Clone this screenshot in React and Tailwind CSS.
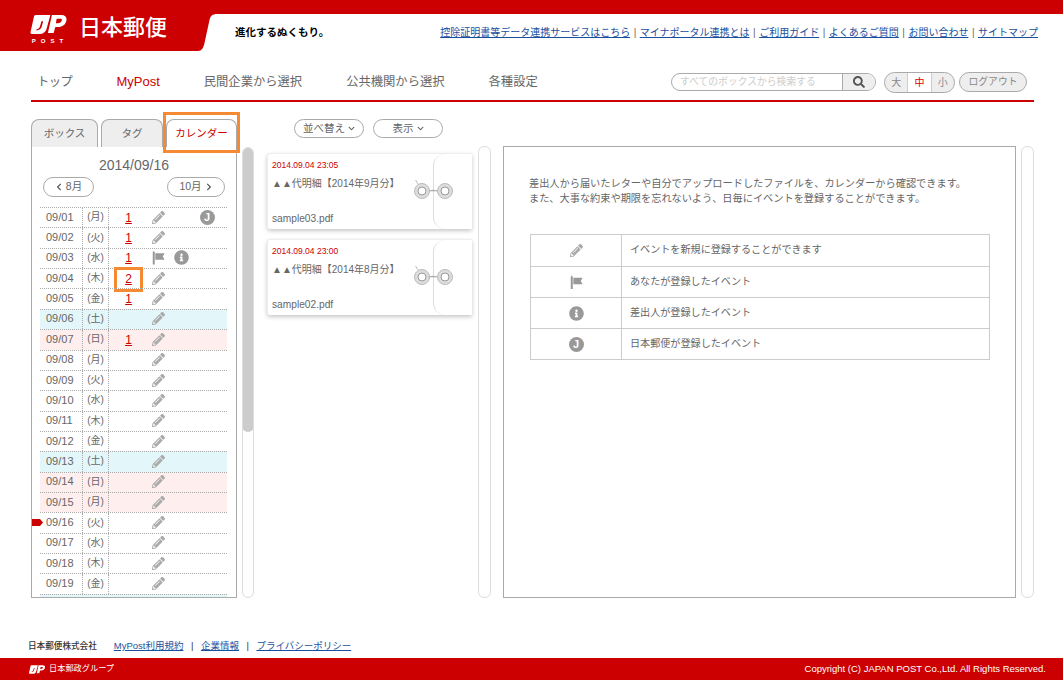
import React from 'react';
import { FaPencilAlt, FaInfoCircle, FaChevronLeft, FaChevronRight, FaChevronDown, FaSearch } from 'react-icons/fa';

const FONT = 'font-["Liberation_Sans","Noto_Sans_CJK_JP",sans-serif]';

const topLinks = ['控除証明書等データ連携サービスはこちら', 'マイナポータル連携とは', 'ご利用ガイド', 'よくあるご質問', 'お問い合わせ', 'サイトマップ'];

const days = [
    { d: '09/01', w: '月', n: '1', j: true },
    { d: '09/02', w: '火', n: '1' },
    { d: '09/03', w: '水', n: '1', flag: true, info: true },
    { d: '09/04', w: '木', n: '2', mark: true },
    { d: '09/05', w: '金', n: '1' },
    { d: '09/06', w: '土', bg: 'sat' },
    { d: '09/07', w: '日', n: '1', bg: 'sun' },
    { d: '09/08', w: '月' },
    { d: '09/09', w: '火' },
    { d: '09/10', w: '水' },
    { d: '09/11', w: '木' },
    { d: '09/12', w: '金' },
    { d: '09/13', w: '土', bg: 'sat' },
    { d: '09/14', w: '日', bg: 'sun' },
    { d: '09/15', w: '月', bg: 'sun' },
    { d: '09/16', w: '火', today: true },
    { d: '09/17', w: '水' },
    { d: '09/18', w: '木' },
    { d: '09/19', w: '金' },
];

const JpMark = ({ className }) => (
    <svg className={className} viewBox="0 0 38 20" fill="#fff" fillRule="evenodd">
        <path d="M5.5 0H21L17 14.5C16 18 13.5 20 9.5 20H1.5C0.4 20 -0.2 19.2 0.1 18L3.6 2C3.9 0.8 4.5 0 5.5 0ZM11.6 6.5L10 12C9.5 13.6 8.4 14.6 6.4 15L6.2 16.2C9.6 16 11.2 14.4 11.9 12L13.4 6.5Z" />
        <path d="M22.6 0H32.5C36.8 0 38.6 2.4 37.8 6C36.9 10 33.8 12.6 29 12.6H26.2L24.4 19H18.4ZM27.6 4L26.8 8.6H28.8C31 8.6 32.6 7.4 33 5.8C33.3 4.6 32.6 4 31.4 4Z" />
    </svg>
);

const FlagIcon = ({ className }) => (
    <svg className={className} viewBox="0 0 14 15" fill="#999">
        <path d="M0.8 2.2L1.9 0.3L3 2.2V15H0.8Z" />
        <path d="M3.6 3H13.6L11.6 6.5L13.6 10H3.6Z" />
    </svg>
);

const JIcon = () => (
    <span className="inline-flex items-center justify-center rounded-full bg-[#999] text-white font-bold text-[11px] leading-none w-[15px] h-[15px]">J</span>
);

const RingIcon = () => (
    <svg className="w-[40px] h-[24px]" viewBox="0 0 40 24" fill="none">
        <path d="M1.5 1L4 5" stroke="#aaa" strokeWidth="0.8" />
        <circle cx="8" cy="12" r="7.5" stroke="#bbb" strokeWidth="1" fill="#ddd" />
        <circle cx="8" cy="12" r="4" stroke="#999" strokeWidth="1" fill="#fff" />
        <path d="M15 12L19 11.4L24 12" stroke="#aaa" strokeWidth="1.2" />
        <circle cx="31" cy="12" r="7.5" stroke="#bbb" strokeWidth="1" fill="#ddd" />
        <circle cx="31" cy="12" r="4" stroke="#999" strokeWidth="1" fill="#fff" />
    </svg>
);

const ScrollTrack = ({ thumb }) => (
    <div className="w-[13px] h-full rounded-[6px] border border-[#ddd] bg-white overflow-hidden">
        {thumb && <div className="-m-px h-[285px] rounded-[6px] bg-[#ccc]" />}
    </div>
);

const DayRow = ({ day }) => {
    const bg = day.bg === 'sat' ? 'bg-[#e3f7fb]' : day.bg === 'sun' ? 'bg-[#ffeeee]' : '';
    return (
        <div className={`relative grid grid-cols-[42px_26px_40px_20px_27px_24px] h-[20.37px] items-center border-t border-dotted border-[#aaa] text-[#666] ${bg}`}>
            {day.today && (
                <svg className="absolute left-[-8px] top-[6px] w-[11px] h-[7px]" viewBox="0 0 11 7" fill="#cc0000">
                    <path d="M0 0H8L11 3.5L8 7H0Z" />
                </svg>
            )}
            <span className="pl-[6px] pb-[1px] text-[11px] leading-none">{day.d}</span>
            <span className="h-full flex items-center justify-center pb-[1px] border-l border-dotted border-[#aaa] text-[10px] leading-none">({day.w})</span>
            <span className="h-full flex items-center justify-center border-l border-dotted border-[#aaa]">
                {day.n && (
                    <span className="relative text-[12px] leading-none">
                        <a className="text-[#cc0000] underline">{day.n}</a>
                        {day.mark && <span className="absolute left-[-11px] top-[-6px] w-[29px] h-[25px] border-[3px] border-[#f58a32]" />}
                    </span>
                )}
            </span>
            <span className="flex justify-center pb-[1px]">
                {day.flag ? <FlagIcon className="w-[13px] h-[15px]" /> : <FaPencilAlt className="text-[#aaa] text-[13px]" />}
            </span>
            <span className="flex justify-center pb-[1px]">{day.info && <FaInfoCircle className="text-[#999] text-[15px]" />}</span>
            <span className="flex justify-center pb-[1px]">{day.j && <JIcon />}</span>
        </div>
    );
};

const MailCard = ({ date, title, file }) => (
    <div className="relative h-[76px] w-[205px] rounded-l-[3px] bg-white shadow-[0_2px_4px_rgba(0,0,0,0.22)] border-t border-l border-[#eee] pl-[4px] pt-[5px] text-[#666]">
        <div className="text-[8.5px] leading-[12px] text-[#cc0000]">{date}</div>
        <div className="mt-[6px] text-[10px] leading-[14px]">{title}</div>
        <div className="mt-[21px] text-[10.2px] leading-[14px]">{file}</div>
        <div className="absolute right-0 top-0 bottom-0 w-[39px] border-l border-[#ddd] rounded-l-[12px]" />
        <div className="absolute left-[146px] top-[25px]"><RingIcon /></div>
    </div>
);

const legend = [
    { icon: <FaPencilAlt className="text-[#aaa] text-[13px]" />, text: 'イベントを新規に登録することができます' },
    { icon: <FlagIcon className="w-[13px] h-[14px]" />, text: 'あなたが登録したイベント' },
    { icon: <FaInfoCircle className="text-[#999] text-[15px]" />, text: '差出人が登録したイベント' },
    { icon: <JIcon />, text: '日本郵便が登録したイベント' },
];

const PillButton = ({ className, children }) => (
    <button className={`h-[19px] flex items-center justify-center rounded-full border border-[#aaa] bg-white text-[10.5px] text-[#666] ${className}`}>
        {children}
    </button>
);

export default function App() {
    return (
        <div className={`${FONT} w-[1063px] h-[680px] overflow-hidden bg-white flex flex-col text-[#666]`}>
            <div className="h-[14px] bg-[#cc0000] shrink-0" />

            {/* header */}
            <div className="h-[37px] shrink-0 flex">
                <div className="relative w-[198px] h-full bg-[#cc0000] flex items-start pl-[29px]">
                    <div className="w-[38px] flex flex-col items-center">
                        <JpMark className="w-[37px] h-[19px] mt-[1px]" />
                        <span className="text-[6px] font-bold text-white leading-none tracking-[5px] mt-[4px] pl-[4px]">POST</span>
                    </div>
                    <span className="ml-[12px] mt-[-2px] text-[22px] font-medium leading-[32px] text-white whitespace-nowrap">日本郵便</span>
                </div>
                <svg className="w-[20px] h-full shrink-0" viewBox="0 0 20 37" fill="#cc0000">
                    <path d="M0 0H19.5C14 0 12.5 2 11.5 6L6.5 29C5.5 34 3.5 37 0 37Z" />
                </svg>
                <span className="ml-[17px] mt-[12px] text-[10.5px] leading-[13px] font-bold text-black whitespace-nowrap">進化するぬくもり。</span>
                <div className="ml-auto mr-[25px] mt-[12px] self-start flex items-center text-[10px] leading-[13px] whitespace-nowrap">
                    {topLinks.map((l, i) => (
                        <React.Fragment key={l}>
                            {i > 0 && <span className="mx-[3.5px] text-[#666]">|</span>}
                            <a className="text-[#1a4fa0] underline">{l}</a>
                        </React.Fragment>
                    ))}
                </div>
            </div>

            {/* nav */}
            <div className="mx-[29px] ml-[31px] mt-[21px] h-[30px] shrink-0 pb-[8px] border-b-2 border-[#cc0000] flex items-center">
                <div className="flex items-center gap-[44px] pl-[6px] text-[12.3px] whitespace-nowrap">
                    <span className="tracking-[-0.5px]">トップ</span>
                    <span className="text-[#cc0000] text-[13px]">MyPost</span>
                    <span>民間企業から選択</span>
                    <span>公共機関から選択</span>
                    <span>各種設定</span>
                </div>
                <div className="ml-auto flex items-center pr-[7px]">
                    <div className="w-[205px] h-[18px] flex items-center rounded-full border border-[#aaa] overflow-hidden">
                        <span className="flex-1 pl-[8px] text-[9.8px] text-[#ccc] whitespace-nowrap">すべてのボックスから検索する</span>
                        <span className="w-[33px] h-full flex items-center justify-center bg-[#eee] border-l border-[#aaa]">
                            <FaSearch className="text-[#555] text-[12px]" />
                        </span>
                    </div>
                    <div className="ml-[8px] w-[71px] h-[21px] flex rounded-full border border-[#aaa] overflow-hidden text-[10px] bg-[#eee]">
                        <span className="flex-1 flex items-center justify-center text-[#888]">大</span>
                        <span className="flex-1 flex items-center justify-center bg-white border-x border-[#ccc] text-[#dd0000]">中</span>
                        <span className="flex-1 flex items-center justify-center text-[#888]">小</span>
                    </div>
                    <div className="ml-[4px] w-[68px] h-[20px] flex items-center justify-center rounded-full border border-[#aaa] bg-[#eee] text-[9.8px] text-[#888]">ログアウト</div>
                </div>
            </div>

            {/* main */}
            <div className="mx-[29px] ml-[31px] mt-[17px] h-[479px] shrink-0 flex">
                {/* calendar column */}
                <div className="w-[223px] shrink-0 flex flex-col">
                    <div className="relative h-[28px] flex shrink-0 text-[10.5px]">
                        <span className="w-[67px] flex items-center justify-center rounded-t-[8px] border border-b-0 border-[#aaa] bg-[#eee]">ボックス</span>
                        <span className="ml-[3px] w-[62px] flex items-center justify-center rounded-t-[8px] border border-b-0 border-[#aaa] bg-[#eee]">タグ</span>
                        <span className="ml-[3px] w-[71px] flex items-center justify-center rounded-t-[8px] border border-b-0 border-[#aaa] bg-white text-[#cc0000]">カレンダー</span>
                        <span className="absolute left-[132px] top-[-7px] w-[77px] h-[41px] border-[3px] border-[#f58a32]" />
                    </div>
                    <div className="flex flex-1 min-h-0 gap-[5px]">
                        <div className="w-[206px] shrink-0 border border-t-0 border-[#aaa] overflow-hidden">
                            <div className="pt-[9px] text-center text-[14px] leading-[18px]">2014/09/16</div>
                            <div className="mt-[3px] px-[11px] flex justify-between">
                                <button className="w-[51px] h-[20px] flex items-center justify-center gap-[3px] rounded-full border border-[#aaa] text-[10.5px] text-[#666]">
                                    <FaChevronLeft className="text-[8px] text-[#555]" />8月
                                </button>
                                <button className="w-[58px] h-[20px] flex items-center justify-center gap-[3px] rounded-full border border-[#aaa] text-[10.5px] text-[#666]">
                                    10月<FaChevronRight className="text-[8px] text-[#555]" />
                                </button>
                            </div>
                            <div className="mt-[10px] mx-[8px] w-[187px]">
                                {days.map((day) => <DayRow key={day.d} day={day} />)}
                                <div className="h-[4px] bg-[#e3f7fb] border-t border-dotted border-[#aaa]" />
                            </div>
                        </div>
                        <ScrollTrack thumb />
                    </div>
                </div>

                {/* mail column */}
                <div className="ml-[13px] w-[224px] shrink-0 flex flex-col">
                    <div className="h-[27px] shrink-0 flex gap-[9px] pl-[27px]">
                        <PillButton className="w-[70px] gap-[3px]">並べ替え<FaChevronDown className="text-[7px]" /></PillButton>
                        <PillButton className="w-[70px] gap-[3px]">表示<FaChevronDown className="text-[7px]" /></PillButton>
                    </div>
                    <div className="flex flex-1 min-h-0 justify-between">
                        <div className="pt-[7px] flex flex-col gap-[10px]">
                            <MailCard date="2014.09.04 23:05" title="▲▲代明細【2014年9月分】" file="sample03.pdf" />
                            <MailCard date="2014.09.04 23:00" title="▲▲代明細【2014年8月分】" file="sample02.pdf" />
                        </div>
                        <ScrollTrack />
                    </div>
                </div>

                {/* detail column */}
                <div className="ml-[12px] w-[531px] shrink-0 pt-[27px] flex gap-[5px]">
                    <div className="w-[513px] h-full border border-[#aaa] px-[25px] pt-[29px]">
                        <p className="text-[10.2px] leading-[15px] whitespace-nowrap">差出人から届いたレターや自分でアップロードしたファイルを、カレンダーから確認できます。</p>
                        <p className="text-[10.2px] leading-[15px] whitespace-nowrap">また、大事な約束や期限を忘れないよう、日毎にイベントを登録することができます。</p>
                        <div className="mt-[28px] ml-[1px] w-[460px] border border-[#ccc]">
                            {legend.map((row, i) => (
                                <div key={row.text} className={`flex h-[31px] ${i > 0 ? 'border-t border-[#ccc]' : ''}`}>
                                    <span className="w-[91px] flex items-center justify-center border-r border-[#ccc]">{row.icon}</span>
                                    <span className="pl-[8px] pb-[1px] flex items-center text-[10.1px]">{row.text}</span>
                                </div>
                            ))}
                        </div>
                    </div>
                    <ScrollTrack />
                </div>
            </div>

            {/* footer */}
            <div className="mt-auto h-[22px] shrink-0 flex items-center pl-[28px] text-[9.5px] whitespace-nowrap mb-[1px]">
                <span className="text-[#333] font-medium text-[8.6px]">日本郵便株式会社</span>
                <a className="ml-[17px] text-[#1a4fa0] underline">MyPost利用規約</a>
                <span className="mx-[7.5px] text-[#333]">|</span>
                <a className="text-[#1a4fa0] underline">企業情報</a>
                <span className="mx-[7.5px] text-[#333]">|</span>
                <a className="text-[#1a4fa0] underline">プライバシーポリシー</a>
            </div>
            <div className="h-[22px] shrink-0 bg-[#cc0000] flex items-center pl-[29px] pr-[17px] text-white">
                <JpMark className="w-[16px] h-[9px]" />
                <span className="ml-[4px] text-[8.2px]">日本郵政グループ</span>
                <span className="ml-auto text-[9.5px]">Copyright (C) JAPAN POST Co.,Ltd. All Rights Reserved.</span>
            </div>
        </div>
    );
}
